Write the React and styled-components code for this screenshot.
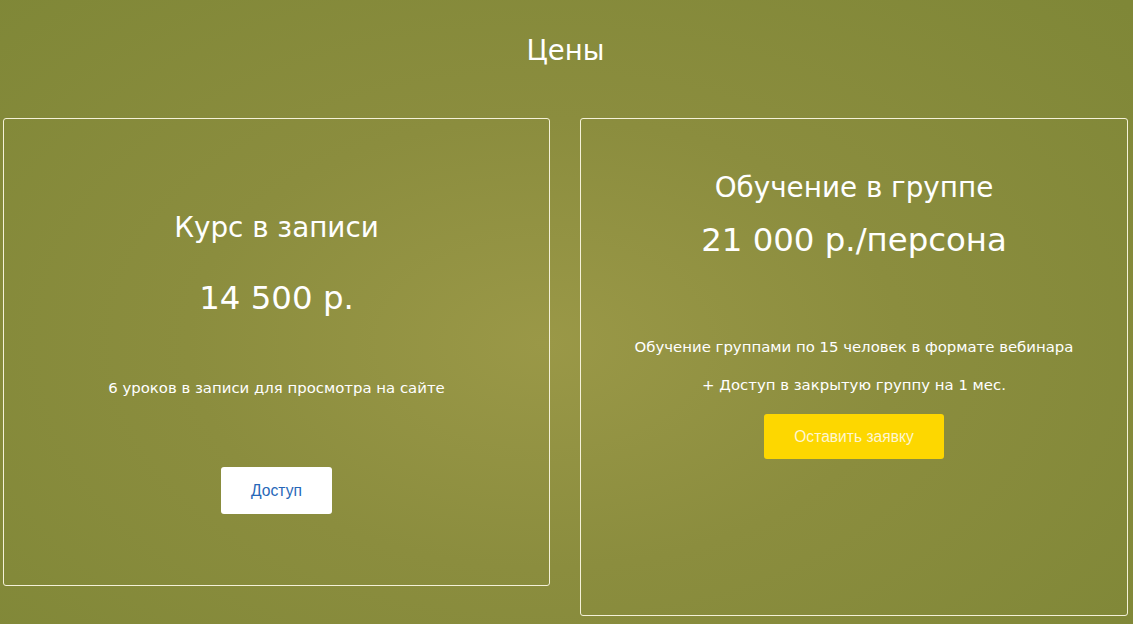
import React from 'react';
import styled, { createGlobalStyle } from 'styled-components';

const GlobalStyle = createGlobalStyle`
  html, body {
    margin: 0;
    padding: 0;
  }
  body {
    font-family: "DejaVu Sans", Verdana, sans-serif;
    background: #858a3a;
  }
`;

const Page = styled.main`
  width: 1133px;
  height: 624px;
  overflow: hidden;
  box-sizing: border-box;
  padding: 0 5px 0 3px;
  background: radial-gradient(ellipse 70% 80% at 48% 55%, #9a9847 0%, #8b8d3e 45%, #7f8737 100%);
  color: #fff;
`;

const Title = styled.h2`
  margin: 0;
  padding-top: 33px;
  height: 118px;
  box-sizing: border-box;
  font-size: 27.5px;
  font-weight: normal;
  line-height: 34px;
  text-align: center;
`;

const Cards = styled.div`
  display: flex;
  align-items: flex-start;
  gap: 30px;
`;

const Card = styled.section`
  width: ${(p) => p.$w}px;
  flex: none;
  box-sizing: border-box;
  border: 1px solid #f4f1d8;
  border-radius: 3px;
  padding: ${(p) => p.$pad};
  display: flex;
  flex-direction: column;
  align-items: center;
  text-align: center;
`;

const Heading = styled.h3`
  margin: 0;
  font-size: 27.8px;
  font-weight: normal;
  line-height: 34px;
`;

const Price = styled.div`
  margin-top: ${(p) => p.$gap}px;
  font-size: 32.4px;
  line-height: 38px;
`;

const Note = styled.p`
  margin: ${(p) => p.$gap}px 0 0;
  font-size: 14.9px;
  line-height: 20px;
`;

const Button = styled.a`
  display: flex;
  align-items: center;
  justify-content: center;
  margin-top: ${(p) => p.$gap}px;
  width: ${(p) => p.$w}px;
  height: ${(p) => p.$h}px;
  border-radius: 3px;
  background: ${(p) => (p.$yellow ? '#fdd700' : '#ffffff')};
  color: ${(p) => (p.$yellow ? '#fdf6d0' : '#2767b8')};
  font-family: "Liberation Sans", Arial, sans-serif;
  font-size: 15.6px;
  text-decoration: none;
  cursor: pointer;
`;

export default function App() {
  return (
    <>
      <GlobalStyle />
      <Page>
        <Title>Цены</Title>
        <Cards>
          <Card $w={547} $pad="92px 0 71px">
            <Heading>Курс в записи</Heading>
            <Price $gap={34}>14 500 р.</Price>
            <Note $gap={61}>6 уроков в записи для просмотра на сайте</Note>
            <Button $gap={69} $w={111} $h={47}>Доступ</Button>
          </Card>
          <Card $w={548} $pad="52px 0 156px">
            <Heading>Обучение в группе</Heading>
            <Price $gap={16}>21 000 р./персона</Price>
            <Note $gap={78}>Обучение группами по 15 человек в формате вебинара</Note>
            <Note $gap={18}>+ Доступ в закрытую группу на 1 мес.</Note>
            <Button $gap={19} $w={180} $h={45} $yellow>Оставить заявку</Button>
          </Card>
        </Cards>
      </Page>
    </>
  );
}
